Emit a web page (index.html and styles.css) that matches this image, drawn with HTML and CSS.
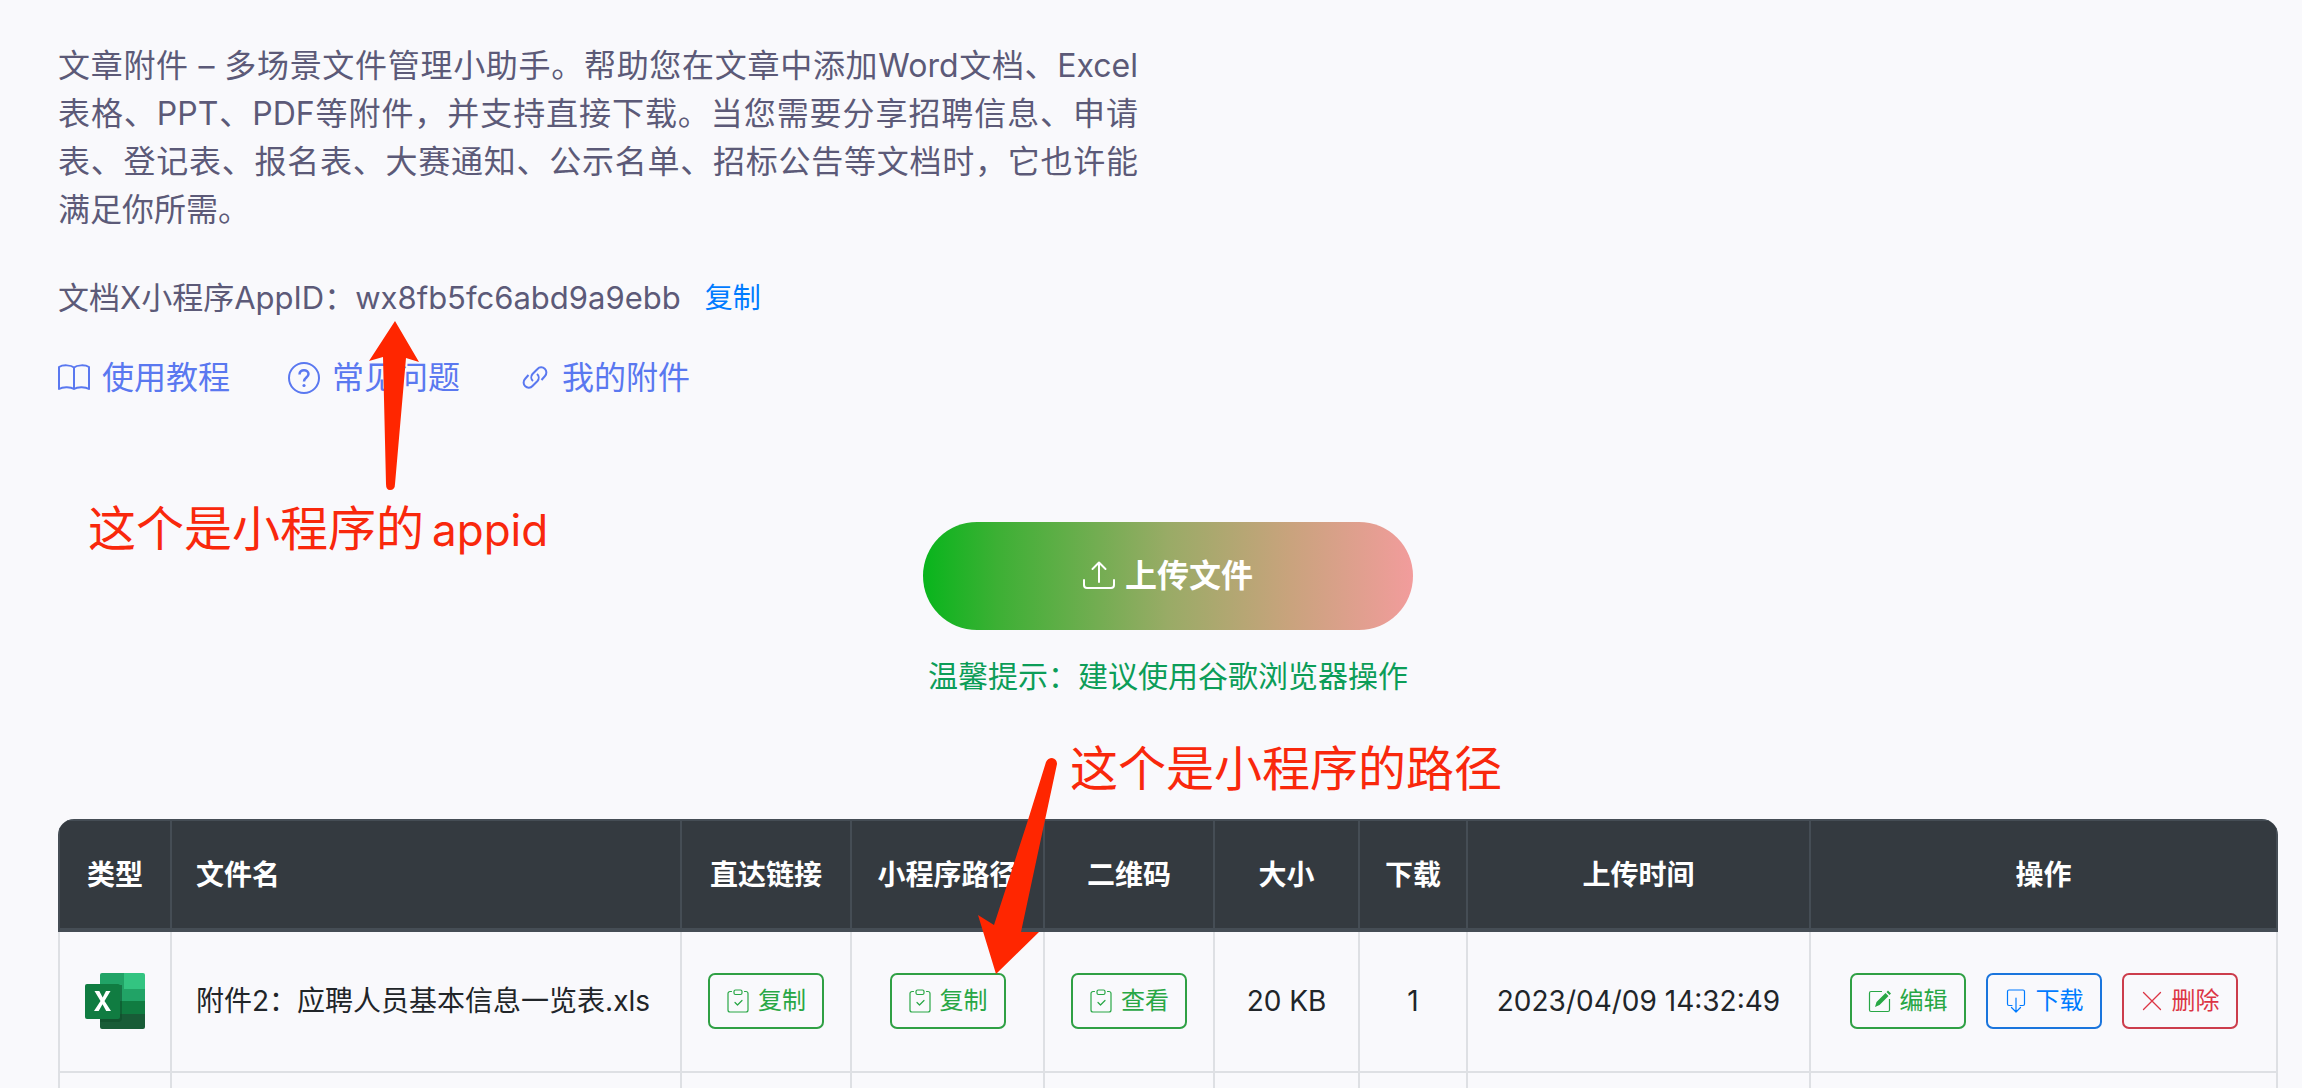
FILE: index.html
```html
<!DOCTYPE html>
<html lang="zh-CN">
<head>
<meta charset="utf-8">
<meta name="viewport" content="width=device-width, initial-scale=1">
<title>文章附件</title>
<link rel="stylesheet" href="styles.css">
</head>
<body>
<svg class="sprite" aria-hidden="true">
  <symbol id="i-clip" viewBox="0 0 24 24" fill="none" stroke="currentColor" stroke-width="1.200" stroke-linecap="round" stroke-linejoin="round">
    <path d="M5.500 2.500H4a2 2 0 0 0-2 2V21a2 2 0 0 0 2 2h16a2 2 0 0 0 2-2V4.500a2 2 0 0 0-2-2h-1.500"/>
    <rect x="8" y="1" width="8" height="4.500" rx="1.500"/>
    <path d="M9 13.500l2.500 2.500L16 11.500"/>
  </symbol>
</svg>
<main class="page">
  <section class="intro">
    <p class="desc">文章附件 – 多场景文件管理小助手。帮助您在文章中添加Word文档、Excel表格、PPT、PDF等附件，并支持直接下载。当您需要分享招聘信息、申请表、登记表、报名表、大赛通知、公示名单、招标公告等文档时，它也许能满足你所需。</p>
    <div class="appid">
      <span>文档X小程序AppID：wx8fb5fc6abd9a9ebb</span>
      <button type="button" class="copy">复制</button>
    </div>
    <nav class="links">
      <a href="#guide"><svg viewBox="0 0 32 32" fill="none" stroke="currentColor" stroke-width="2" stroke-linejoin="round"><path d="M16 5.500C13 3 5 2.500 1 5v22c4-2.500 12-2 15 0 3-2 11-2.500 15 0V5c-4-2.500-12-2-15 .5zV27"/></svg>使用教程</a>
      <a href="#faq"><svg viewBox="0 0 32 32" fill="none" stroke="currentColor" stroke-width="2"><circle cx="16" cy="16" r="15"/><path d="M11.500 12.500c0-6 9-5.500 9-.5 0 3.500-4.500 3.500-4.500 7.500" stroke-width="2.500"/><circle cx="16" cy="23.500" r="1.600" fill="currentColor" stroke="none"/></svg>常见问题</a>
      <a href="#files"><svg viewBox="0 0 32 32" fill="none" stroke="currentColor" stroke-width="2"><path d="M15 19a5 5 0 0 1-.5-7l5-5a5 5 0 0 1 7.500 7l-3.500 4M19 12a5 5 0 0 1 .5 7l-5 5a5 5 0 0 1-7.500-7l3.500-4"/></svg>我的附件</a>
    </nav>
  </section>

  <section class="upload">
    <button type="button" class="upload-btn"><svg viewBox="0 0 32 32" fill="none" stroke="currentColor" stroke-width="2" stroke-linecap="round" stroke-linejoin="round"><path d="M16 22V2.500M9.500 9L16 2.500 22.500 9M1 20v5a3 3 0 0 0 3 3h24a3 3 0 0 0 3-3v-5"/></svg>上传文件</button>
    <p class="hint">温馨提示：建议使用谷歌浏览器操作</p>
  </section>

  <div class="table-wrap">
    <table class="files">
      <colgroup><col class="c-type"><col><col class="c-link"><col class="c-path"><col class="c-link"><col class="c-size"><col class="c-count"><col class="c-time"><col class="c-ops"></colgroup>
      <thead>
        <tr><th>类型</th><th class="name">文件名</th><th>直达链接</th><th>小程序路径</th><th>二维码</th><th>大小</th><th>下载</th><th>上传时间</th><th>操作</th></tr>
      </thead>
      <tbody>
        <tr>
          <td><svg class="xls" viewBox="0 0 60 56" role="img" aria-label="Excel">
            <path d="M17 0h22v14H15V2a2 2 0 0 1 2-2z" fill="#21a366"/>
            <path d="M39 0h19a2 2 0 0 1 2 2v14H39z" fill="#33c481"/>
            <path d="M15 14h24v14H15zM39 16h21v12H39z" fill="#21a366"/>
            <path d="M15 28h45v13H15z" fill="#107c41"/>
            <path d="M15 41h45v13a2 2 0 0 1-2 2H17a2 2 0 0 1-2-2z" fill="#185c37"/>
            <path d="M15 12h22v33a4 4 0 0 1-4 4H15z" fill="#0b4a28" opacity=".5"/>
            <rect y="11" width="35" height="35" rx="2" fill="#107c41"/>
            <path d="M9 38l6.500-10L9.500 18h4.800l3.400 6.500L21 18h4.500l-6 10L26 38h-4.800l-3.700-6.700L13.700 38z" fill="#fff"/>
          </svg></td>
          <td class="name">附件2：应聘人员基本信息一览表.xls</td>
          <td><button type="button" class="btn green"><svg><use href="#i-clip"/></svg>复制</button></td>
          <td><button type="button" class="btn green"><svg><use href="#i-clip"/></svg>复制</button></td>
          <td><button type="button" class="btn green"><svg><use href="#i-clip"/></svg>查看</button></td>
          <td>20 KB</td>
          <td>1</td>
          <td>2023/04/09 14:32:49</td>
          <td><div class="ops">
            <button type="button" class="btn green"><svg viewBox="0 0 24 24" fill="none" stroke="currentColor" stroke-width="1.200"><path d="M14 2.500H3a1.500 1.500 0 0 0-1.500 1.500v17A1.500 1.500 0 0 0 3 22.500h17a1.500 1.500 0 0 0 1.500-1.500V10"/><path d="M7 18l1.500-5L17.500 4l3 3-9 9zM18.500 3l1.500-1.500 3 3L21.500 6z" fill="currentColor" stroke="none"/></svg>编辑</button>
            <button type="button" class="btn blue"><svg viewBox="0 0 24 24" fill="none" stroke="currentColor" stroke-width="1.200" stroke-linecap="round" stroke-linejoin="round"><path d="M8 16.500H5A1.500 1.500 0 0 1 3.500 15V2.500A1.500 1.500 0 0 1 5 1h14a1.500 1.500 0 0 1 1.500 1.500V15a1.500 1.500 0 0 1-1.500 1.500h-3M12 9v14M7.500 18.500L12 23l4.500-4.500"/></svg>下载</button>
            <button type="button" class="btn red"><svg viewBox="0 0 24 24" fill="none" stroke="currentColor" stroke-width="1.300" stroke-linecap="round"><path d="M3.500 3.500l17 17M20.500 3.500l-17 17"/></svg>删除</button>
          </div></td>
        </tr>
        <tr class="next"><td></td><td></td><td></td><td></td><td></td><td></td><td></td><td></td><td></td></tr>
      </tbody>
    </table>
  </div>

  <div class="note note-appid">这个是小程序的<span>appid</span></div>
  <svg class="arrow arrow-appid" viewBox="0 0 50 170" aria-hidden="true"><path d="M26 0L50 41l-13-4-11 126q0 6-5 6-4 0-4-6L14 36 0 40z"/></svg>
  <div class="note note-path">这个是小程序的路径</div>
  <svg class="arrow arrow-path" viewBox="0 0 80 216" aria-hidden="true"><path d="M68 4q2-4 6-4 5 1 5 6L67 62 43 174l18 0-43 42L0 157l16 10L50 62z"/></svg>
</main>
</body>
</html>
```
FILE: styles.css
```css
* { box-sizing: border-box; }

body {
  margin: 0;
  background: #f9f9fc;
  color: #212529;
  font-family: Inter, "Noto Sans CJK SC", sans-serif;
  font-size: 28px;
  line-height: 42px;
}

button { font: inherit; cursor: pointer; }
svg { flex: none; }
.sprite { position: absolute; width: 0; height: 0; }

.page {
  position: relative;
  padding: 42px 24px 0 58px;
}

.desc {
  max-width: 1080px;
  margin: 0;
  color: #5c5a78;
  font-size: 32px;
  line-height: 48px;
  text-align: justify;
}

.appid {
  display: flex;
  align-items: center;
  gap: 24px;
  margin-top: 40px;
  color: #5c5a78;
  font-size: 31px;
  line-height: 48px;
}

.copy {
  padding: 0;
  border: 0;
  background: none;
  color: #007bff;
  font-size: 28px;
}

.links {
  display: flex;
  gap: 58px;
  margin-top: 32px;
}

.links a {
  display: flex;
  align-items: center;
  gap: 12px;
  color: #5a78f0;
  font-size: 32px;
  line-height: 48px;
  text-decoration: none;
}

.links svg, .upload-btn svg { width: 32px; height: 32px; }

.upload {
  display: flex;
  flex-direction: column;
  align-items: center;
  gap: 23px;
  margin-top: 120px;
}

.upload-btn {
  display: flex;
  align-items: center;
  justify-content: center;
  gap: 10px;
  width: 490px;
  height: 108px;
  border: 0;
  border-radius: 54px;
  background: linear-gradient(90deg, #08b51c, #3cb034 15%, #99ab66 50%, #c9a37d 75%, #f29c9c);
  color: #fff;
  font-size: 32px;
  font-weight: 700;
}

.hint {
  margin: 0;
  color: #0c9d58;
  font-size: 30px;
  line-height: 46px;
}

.table-wrap {
  margin-top: 120px;
  border-radius: 16px 16px 0 0;
  overflow: hidden;
}

.files {
  width: 100%;
  border-collapse: collapse;
  table-layout: fixed;
  text-align: center;
}

.c-type { width: 112px; }
.c-link { width: 170px; }
.c-path { width: 193px; }
.c-size { width: 145px; }
.c-count { width: 108px; }
.c-time { width: 343px; }
.c-ops { width: 467px; }

.files th {
  height: 110px;
  padding: 0;
  border: 2px solid #454d55;
  border-bottom-width: 4px;
  background: #343a40;
  color: #fff;
  font-weight: 700;
}

.files td {
  height: 142px;
  padding: 0 0 2px;
  border: 2px solid #dee0e4;
}

.files .name { padding-left: 24px; text-align: left; }
.files .next td { height: 16px; border-bottom: 0; }
.xls { display: block; width: 60px; height: 56px; margin: 0 auto; }

.btn {
  display: inline-flex;
  align-items: center;
  gap: 8px;
  height: 56px;
  padding: 0 16px;
  border: 2px solid;
  border-radius: 7px;
  background: none;
  font-size: 24px;
  vertical-align: middle;
}

.btn svg { width: 24px; height: 24px; }
.green { color: #28a745; }
.blue { color: #007bff; }
.red { color: #dc3545; }
.btn.green { border-color: #2fa044; }
.btn.blue { border-color: #1a75dd; }
.btn.red { border-color: #cc3d4c; }

.ops {
  display: flex;
  justify-content: center;
  gap: 20px;
}

/* Hand-placed annotations over the page */
.note {
  position: absolute;
  color: #f9280c;
  font-size: 48px;
  line-height: 72px;
  white-space: nowrap;
}

.note span { margin-left: 8px; font-size: 44px; }
.note-appid { left: 88px; top: 493px; }
.note-path { left: 1070px; top: 733px; }

.arrow { position: absolute; fill: #ff2600; }
.arrow-appid { left: 369px; top: 321px; width: 50px; height: 170px; }
.arrow-path { left: 978px; top: 758px; width: 80px; height: 216px; }
```
